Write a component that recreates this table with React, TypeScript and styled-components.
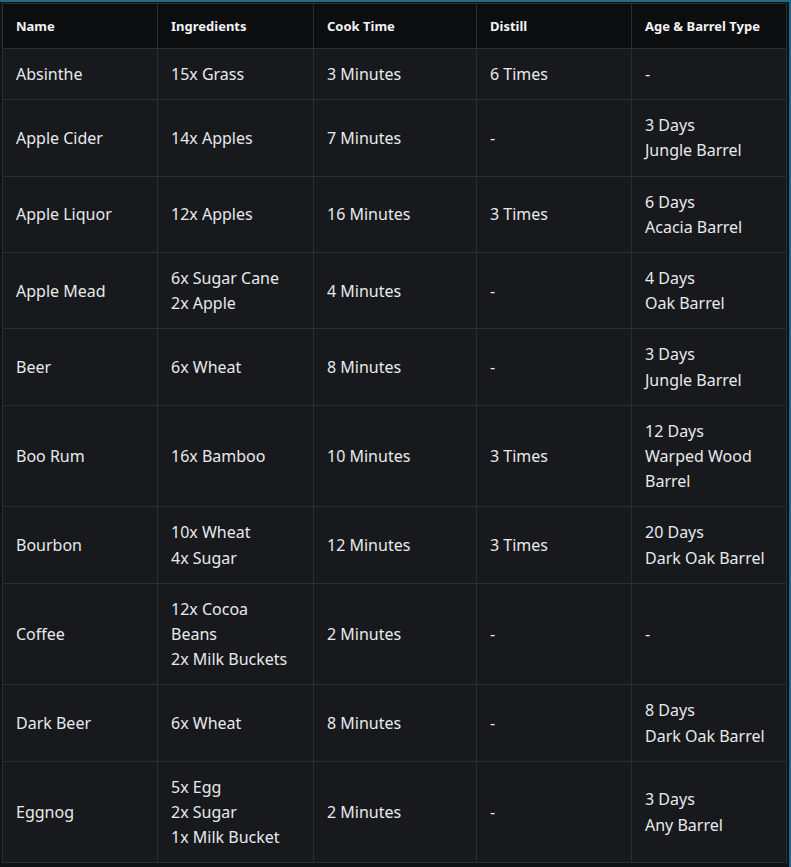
import React from "react";
import styled, { createGlobalStyle } from "styled-components";

const Global = createGlobalStyle`
  html, body { margin: 0; padding: 0; background: #111214; }
  body { font-family: "Noto Sans", "Liberation Sans", sans-serif; }
`;

const Frame = styled.div`
  width: 791px;
  height: 867px;
  box-sizing: border-box;
  border-top: 2px solid #1d6b86;
  border-right: 2px solid #1d6b86;
  padding: 1px 3px 0 2px;
  background: #111214;
  overflow: hidden;
`;

const Table = styled.table`
  border-collapse: collapse;
  width: 784px;
  table-layout: fixed;
  color: #e8e9eb;
`;

const HeadCell = styled.th<{ $w: number }>`
  box-sizing: border-box;
  width: ${(p) => p.$w}px;
  background: #0c0d0f;
  border: 1px solid #2a2d32;
  text-align: left;
  font-weight: 700;
  font-size: 13px;
  line-height: 19px;
  padding: 13px 13px 12px;
  color: #f2f3f5;
  white-space: nowrap;
`;

const Cell = styled.td`
  box-sizing: border-box;
  background: #17191d;
  border: 1px solid #2a2d32;
  font-size: 16px;
  line-height: 25.2px;
  padding: 13px 13px 12px;
  vertical-align: middle;
`;

const Line = styled.div`
  white-space: nowrap;
`;

const cols: [string, number][] = [
  ["Name", 155],
  ["Ingredients", 156],
  ["Cook Time", 163],
  ["Distill", 155],
  ["Age & Barrel Type", 155],
];

const rows: string[][][] = [
  [["Absinthe"], ["15x Grass"], ["3 Minutes"], ["6 Times"], ["-"]],
  [["Apple Cider"], ["14x Apples"], ["7 Minutes"], ["-"], ["3 Days", "Jungle Barrel"]],
  [["Apple Liquor"], ["12x Apples"], ["16 Minutes"], ["3 Times"], ["6 Days", "Acacia Barrel"]],
  [["Apple Mead"], ["6x Sugar Cane", "2x Apple"], ["4 Minutes"], ["-"], ["4 Days", "Oak Barrel"]],
  [["Beer"], ["6x Wheat"], ["8 Minutes"], ["-"], ["3 Days", "Jungle Barrel"]],
  [["Boo Rum"], ["16x Bamboo"], ["10 Minutes"], ["3 Times"], ["12 Days", "Warped Wood", "Barrel"]],
  [["Bourbon"], ["10x Wheat", "4x Sugar"], ["12 Minutes"], ["3 Times"], ["20 Days", "Dark Oak Barrel"]],
  [["Coffee"], ["12x Cocoa", "Beans", "2x Milk Buckets"], ["2 Minutes"], ["-"], ["-"]],
  [["Dark Beer"], ["6x Wheat"], ["8 Minutes"], ["-"], ["8 Days", "Dark Oak Barrel"]],
  [["Eggnog"], ["5x Egg", "2x Sugar", "1x Milk Bucket"], ["2 Minutes"], ["-"], ["3 Days", "Any Barrel"]],
];

export default function App() {
  return (
    <>
      <Global />
      <Frame>
        <Table>
          <thead>
            <tr>
              {cols.map(([c, w]) => (
                <HeadCell key={c} $w={w}>
                  {c}
                </HeadCell>
              ))}
            </tr>
          </thead>
          <tbody>
            {rows.map((r, i) => (
              <tr key={i}>
                {r.map((lines, j) => (
                  <Cell key={j}>
                    {lines.map((l, k) => (
                      <Line key={k}>{l}</Line>
                    ))}
                  </Cell>
                ))}
              </tr>
            ))}
          </tbody>
        </Table>
      </Frame>
    </>
  );
}
